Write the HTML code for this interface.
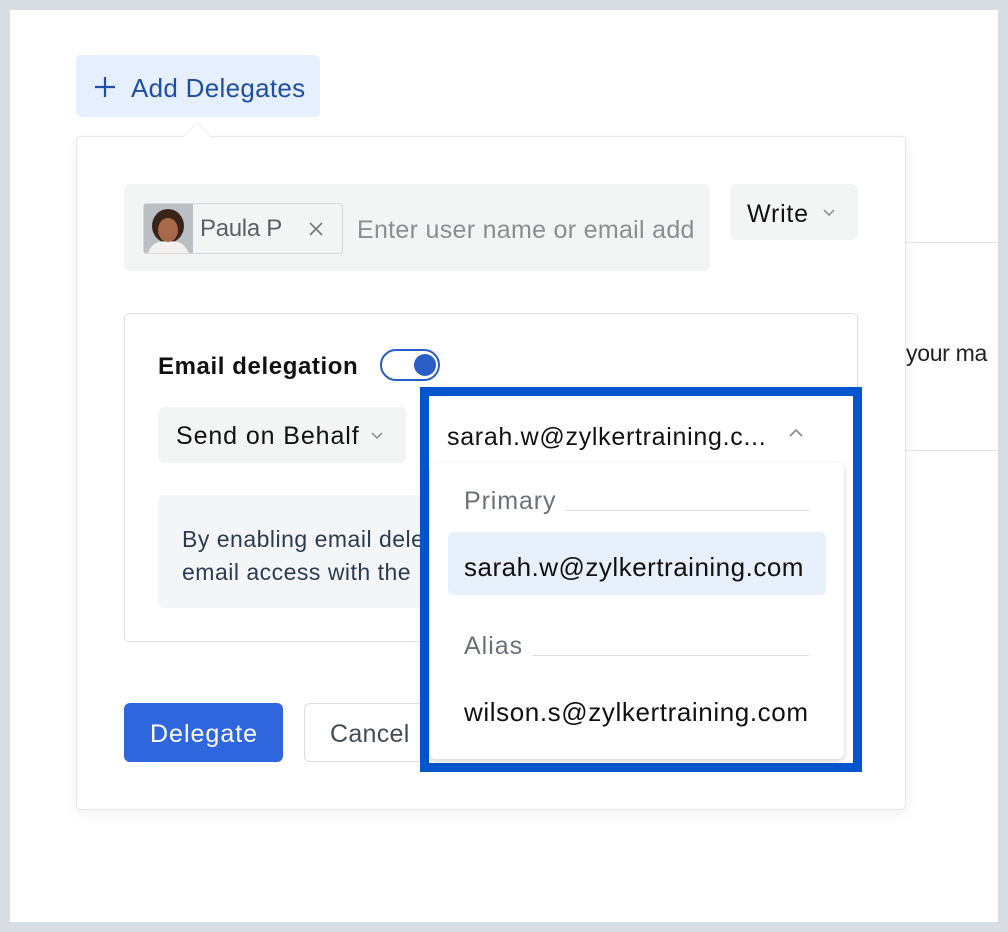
<!DOCTYPE html>
<html><head><meta charset="utf-8"><style>
*{box-sizing:border-box;margin:0;padding:0}
body{width:1008px;height:932px;background:#d6dee4;position:relative;overflow:hidden;font-family:"Liberation Sans",sans-serif;}
.a{position:absolute}
.white{left:10px;top:10px;width:988px;height:912px;background:#fff}
.t{white-space:nowrap;position:absolute}
</style></head><body>
<div class="a white"></div>
<div class="a" style="left:906px;top:242px;width:92px;height:1px;background:#e2e4e6"></div>
<div class="a" style="left:906px;top:450px;width:92px;height:1px;background:#e2e4e6"></div>
<div class="t" style="left:906px;top:340px;font-size:23px;color:#222;letter-spacing:-0.3px">your ma</div>

<div class="a" style="left:76px;top:55px;width:244px;height:62px;background:#e6effd;border-radius:5px"></div>
<svg class="a" style="left:94px;top:76px" width="22" height="22"><path d="M11 1V21M1 11H21" stroke="#1f4fa3" stroke-width="2.2"/></svg>
<div class="t" style="left:131px;top:73px;font-size:26px;color:#1f4fa3;letter-spacing:0.3px">Add Delegates</div>

<div class="a" style="left:76px;top:136px;width:830px;height:674px;background:#fff;border:1px solid #e4e6e8;border-radius:5px;box-shadow:0 4px 14px rgba(0,0,0,.06)"></div>
<div class="a" style="left:187px;top:126px;width:20px;height:20px;background:#fff;transform:rotate(45deg);border-left:1px solid #eee;border-top:1px solid #eee"></div>

<div class="a" style="left:124px;top:184px;width:586px;height:87px;background:#f3f4f4;border-radius:6px"></div>
<div class="a" style="left:143px;top:203px;width:200px;height:51px;border:1.5px solid #d6d8db;border-radius:4px;background:#f3f4f4"></div>
<svg class="a" style="left:144px;top:204px" width="49" height="49"><rect width="49" height="49" fill="#b9bfc2"/><ellipse cx="24" cy="22" rx="16" ry="17" fill="#3a2418"/><ellipse cx="24" cy="26" rx="10" ry="12" fill="#a8684a"/><path d="M4 49C8 38 16 36 24 38C32 36 40 38 45 49Z" fill="#f2efec"/></svg>
<div class="t" style="left:200px;top:215px;font-size:24px;color:#5b5f66;letter-spacing:-0.3px">Paula P</div>
<svg class="a" style="left:308px;top:221px" width="16" height="16"><path d="M2 2L14 14M14 2L2 14" stroke="#777" stroke-width="1.6"/></svg>
<div class="t" style="left:357px;top:216px;font-size:25px;color:#8a8d91;width:338px;overflow:hidden;letter-spacing:0.3px">Enter user name or email addr</div>

<div class="a" style="left:730px;top:184px;width:128px;height:56px;background:#f3f4f4;border-radius:6px"></div>
<div class="t" style="left:747px;top:200px;font-size:25px;color:#111;letter-spacing:0.8px">Write</div>
<svg class="a" style="left:822px;top:208px" width="14" height="10"><path d="M2 2L7 7L12 2" stroke="#888" stroke-width="1.5" fill="none"/></svg>

<div class="a" style="left:124px;top:313px;width:734px;height:329px;border:1.5px solid #e0e2e4;border-radius:5px"></div>
<div class="t" style="left:158px;top:353px;font-size:24px;font-weight:bold;color:#111;letter-spacing:0.6px">Email delegation</div>
<div class="a" style="left:380px;top:349px;width:60px;height:32px;border:2px solid #2c5cc5;border-radius:16px"></div>
<div class="a" style="left:414px;top:354px;width:22px;height:22px;background:#2c5cc5;border-radius:50%"></div>

<div class="a" style="left:158px;top:407px;width:248px;height:56px;background:#f3f4f4;border-radius:6px"></div>
<div class="t" style="left:176px;top:422px;font-size:25px;color:#111;letter-spacing:0.9px">Send on Behalf</div>
<svg class="a" style="left:370px;top:431px" width="14" height="10"><path d="M2 2L7 7L12 2" stroke="#888" stroke-width="1.5" fill="none"/></svg>

<div class="a" style="left:158px;top:495px;width:300px;height:113px;background:#f4f5f7;border-radius:5px"></div>
<div class="t" style="left:182px;top:523px;font-size:23px;color:#2a3c52;line-height:33px;letter-spacing:0.5px">By enabling email dele<br>email access with the</div>

<div class="a" style="left:124px;top:703px;width:159px;height:59px;background:#2f66de;border-radius:6px"></div>
<div class="t" style="left:150px;top:720px;font-size:25px;color:#fff;letter-spacing:1px">Delegate</div>
<div class="a" style="left:304px;top:703px;width:130px;height:59px;border:1.5px solid #dcdde0;border-radius:6px;background:#fff"></div>
<div class="t" style="left:330px;top:720px;font-size:25px;color:#444b55;letter-spacing:0.3px">Cancel</div>

<div class="a" style="left:420px;top:387px;width:442px;height:385px;border:9px solid #0255cc;background:#fff"></div>
<div class="t" style="left:447px;top:423px;font-size:25px;color:#111;letter-spacing:0.7px">sarah.w@zylkertraining.c...</div>
<svg class="a" style="left:788px;top:428px" width="16" height="10"><path d="M2 8L8 2L14 8" stroke="#888" stroke-width="1.6" fill="none"/></svg>
<div class="a" style="left:430px;top:463px;width:414px;height:296px;background:#fff;border-radius:6px;box-shadow:0 2px 6px rgba(0,0,0,.2)"></div>
<div class="t" style="left:464px;top:487px;font-size:25px;color:#6b7079;letter-spacing:0.9px">Primary</div>
<div class="a" style="left:566px;top:510px;width:243px;height:1px;background:#ddd"></div>
<div class="a" style="left:448px;top:532px;width:378px;height:63px;background:#e8f0fc;border-radius:6px"></div>
<div class="t" style="left:464px;top:552px;font-size:26px;color:#111;letter-spacing:0.5px">sarah.w@zylkertraining.com</div>
<div class="t" style="left:464px;top:632px;font-size:25px;color:#6b7079;letter-spacing:1px">Alias</div>
<div class="a" style="left:533px;top:655px;width:276px;height:1px;background:#ddd"></div>
<div class="t" style="left:464px;top:697px;font-size:26px;color:#111;letter-spacing:0.6px">wilson.s@zylkertraining.com</div>
</body></html>
